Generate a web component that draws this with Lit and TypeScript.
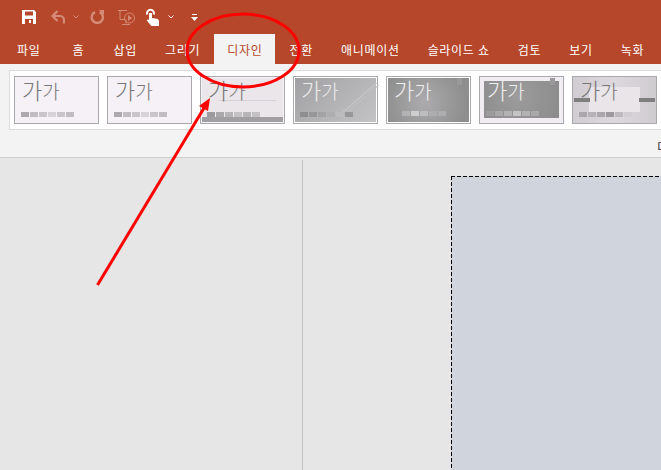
import { LitElement, html, css, svg } from 'lit';
import { customElement, property } from 'lit/decorators.js';

const TABS = ['파일', '홈', '삽입', '그리기', '디자인', '전환', '애니메이션', '슬라이드 쇼', '검토', '보기', '녹화'];

const LIGHT_SW = ['#aca9ad', '#c0bdc2', '#c9c6cb', '#d6d3d8', '#c9c6cb', '#c0bdc2'];

@customElement('theme-thumb')
export class ThemeThumb extends LitElement {
  @property({ type: String }) variant = 'plain';
  @property({ type: Array }) swatches: string[] = LIGHT_SW;

  static styles = css`
    :host {
      display: block;
      flex: none;
    }
    .thumb {
      position: relative;
      box-sizing: border-box;
      width: 85px;
      height: 48px;
      border: 1px solid #a9a9ad;
      background: #f6f1f6;
      color: #777;
    }
    .label {
      position: absolute;
      left: 7px;
      top: 1px;
      font-size: 22px;
      line-height: 22px;
      font-weight: 300;
      white-space: nowrap;
    }
    .label span {
      font-size: 19px;
    }
    .swatches {
      position: absolute;
      left: 6px;
      top: 35px;
      display: flex;
      gap: 1px;
    }
    .swatches i {
      width: 8px;
      height: 5px;
    }
    .deco {
      position: absolute;
    }

    .rule .thumb {
      background: #ebe6ea;
      box-shadow: inset 0 0 0 1px #f6f4f6;
    }
    .rule .line {
      left: 18px;
      right: 8px;
      top: 23px;
      height: 1px;
      background: #d6d2d7;
    }
    .rule .band {
      left: 1px;
      right: 1px;
      top: 40px;
      height: 5px;
      background: #a19fa1;
    }

    .sheen .thumb {
      background: linear-gradient(135deg, #a0a0a2, #c4c4c6);
      box-shadow: inset 0 0 0 1px #fff;
      color: #ececec;
    }
    .sheen .diag {
      left: 44px;
      top: 20px;
      width: 44px;
      height: 1px;
      background: #c8c8ca;
      transform: rotate(-41deg);
    }
    .sheen .diag2 {
      top: 22px;
      left: 46px;
      background: #c0c0c2;
    }

    .glow .thumb {
      background: radial-gradient(circle at 45% 55%, #adabae, #8d8e8d 80%);
      box-shadow: inset 0 0 0 1px #fff;
      color: #f0f0f0;
    }
    .glow .swatches {
      left: 15px;
      top: 34px;
    }
    .corner {
      left: 70px;
      top: 1px;
      width: 5px;
      height: 7px;
      background: #9a9a9b;
    }

    .framed .thumb {
      background: #f1ebf2;
      color: #f0f0f0;
    }
    .framed .panel {
      left: 4px;
      right: 4px;
      top: 4px;
      height: 37px;
      background: radial-gradient(circle at 45% 40%, #9c9c9d, #8b8b8b);
    }
    .framed .swatches {
      top: 34px;
    }

    .card .thumb {
      background: linear-gradient(90deg, #d0ccd1, #dcd8dd 50%, #cfccd0);
    }
    .card .panel {
      left: 16px;
      right: 16px;
      top: 10px;
      height: 25px;
      background: #e9e5e9;
    }
    .card .bar {
      top: 21px;
      width: 16px;
      height: 4px;
      background: #807f80;
    }
    .card .bar.left {
      left: 1px;
    }
    .card .bar.right {
      right: 1px;
    }
  `;

  private deco() {
    switch (this.variant) {
      case 'rule':
        return html`<div class="deco line"></div><div class="deco band"></div>`;
      case 'sheen':
        return html`<div class="deco diag"></div><div class="deco diag diag2"></div>`;
      case 'glow':
        return html`<div class="deco corner"></div>`;
      case 'framed':
        return html`<div class="deco panel"></div><div class="deco corner"></div>`;
      case 'card':
        return html`<div class="deco panel"></div><div class="deco bar left"></div><div class="deco bar right"></div>`;
      default:
        return '';
    }
  }

  render() {
    return html`
      <div class=${this.variant}>
        <div class="thumb">
          ${this.deco()}
          <div class="label">가<span>가</span></div>
          <div class="swatches">
            ${this.swatches.map((c) => html`<i style="background:${c}"></i>`)}
          </div>
        </div>
      </div>
    `;
  }
}

const FADED = '#d48c78';

const saveIcon = svg`<path fill="#fff" fill-rule="evenodd" d="M0 0h12l2 2v12H0zM3 1.5v4h8v-4zM3 9v5h8V9zM7 10h2v3H7z"/>`;
const undoIcon = svg`<path fill="none" stroke="${FADED}" stroke-width="2.2" d="M2 6h7a4 4 0 0 1 4 4v3.5M6.5 1L1.5 6l5 5"/>`;
const redoIcon = svg`<path fill="none" stroke="${FADED}" stroke-width="2.4" d="M5 2.2a5.6 5.6 0 1 0 4.6 0"/><path fill="${FADED}" d="M9 0h5v5z"/>`;
const showIcon = svg`<g fill="none" stroke="${FADED}" stroke-width="1"><path d="M0 .5h9M2 .5v9h5M8 9.5v4M4 14.5h8"/><circle cx="11.5" cy="8" r="5"/></g><path fill="${FADED}" d="M10 5l4 3-4 3z"/>`;
const touchIcon = svg`<path fill="#fff" d="M3 5h3v5l4.6.8c1.6.3 2.4 1.3 2.4 2.8V18H5.4L.8 12.4l1.2-1.2 1 .9z"/><path fill="none" stroke="#fff" stroke-width="2" d="M1.4 6.5a3.4 3.4 0 1 1 6.2 0"/>`;

@customElement('app-root')
export class AppRoot extends LitElement {
  static styles = css`
    :host {
      display: block;
      width: 661px;
      height: 470px;
      position: relative;
      overflow: hidden;
      font-family: 'Noto Sans CJK KR', 'Noto Sans', sans-serif;
      background: #e6e6e6;
    }
    .titlebar {
      height: 34px;
      background: #b7472a;
      display: flex;
      align-items: center;
      padding-left: 22px;
    }
    .titlebar svg {
      display: block;
      flex: none;
    }
    .tabs {
      height: 30px;
      background: #b7472a;
      display: flex;
    }
    .tab {
      flex: none;
      display: flex;
      align-items: center;
      justify-content: center;
      padding: 0 14px;
      color: #fff;
      font-size: 12px;
      letter-spacing: 0.7px;
      white-space: nowrap;
    }
    .tab.first {
      padding: 0 17px;
    }
    .tab.solo {
      box-sizing: border-box;
      width: 42px;
      padding: 0;
    }
    .tab.active {
      background: #f3f3f3;
      color: #b7472a;
      padding: 0 13px;
    }
    .ribbon {
      box-sizing: border-box;
      height: 94px;
      background: #f3f3f3;
      border-bottom: 1px solid #cfcfcf;
      padding: 6px 0 0 9px;
    }
    .gallery {
      box-sizing: border-box;
      height: 60px;
      width: 660px;
      background: #fff;
      border: 1px solid #dcdcdc;
      border-right: 0;
      padding: 5px 0 0 4px;
      display: flex;
      gap: 8px;
      overflow: hidden;
    }
    .groupname {
      font-size: 12px;
      line-height: 14px;
      padding: 10px 0 0 648px;
      color: #333;
      white-space: nowrap;
      overflow: hidden;
    }
    .work {
      display: flex;
      height: 312px;
      overflow: hidden;
    }
    .pane {
      flex: none;
      width: 302px;
    }
    .stage {
      flex: 1;
      margin-top: 2px;
      border-left: 1px solid #c4c4c4;
      padding: 16px 0 0 148px;
    }
    .slide {
      width: 500px;
      height: 400px;
      background-color: #d0d4dd;
      background-image:
        repeating-linear-gradient(90deg, #000 0 4px, transparent 4px 6px),
        repeating-linear-gradient(180deg, #000 0 4px, transparent 4px 6px);
      background-size: 100% 1px, 1px 100%;
      background-repeat: no-repeat;
    }
    .marks {
      position: absolute;
      inset: 0;
      pointer-events: none;
    }
  `;

  render() {
    return html`
      <div class="titlebar">
        <svg width="14" height="14" viewBox="0 0 14 14">${saveIcon}</svg>
        <svg style="margin-left:15px" width="14" height="14" viewBox="0 0 14 14">${undoIcon}</svg>
        <svg style="margin-left:8px" width="6" height="4" viewBox="0 0 6 4"><path fill="none" stroke="${FADED}" d="M.5.5L3 3 5.5.5"/></svg>
        <svg style="margin-left:11px" width="14" height="14" viewBox="0 0 14 14">${redoIcon}</svg>
        <svg style="margin-left:14px" width="17" height="15" viewBox="0 0 17 15">${showIcon}</svg>
        <svg style="margin-left:11px" width="14" height="18" viewBox="0 0 14 18">${touchIcon}</svg>
        <svg style="margin-left:8px" width="6" height="4" viewBox="0 0 6 4"><path fill="none" stroke="#fff" d="M.5.5L3 3 5.5.5"/></svg>
        <svg style="margin-left:17px" width="7" height="7" viewBox="0 0 7 7"><path fill="#fff" d="M1 0h5v1H1zM0 3h7L3.5 7z"/></svg>
      </div>
      <div class="tabs">
        ${TABS.map((t, i) => html`
          <div class="tab ${i === 0 ? 'first' : ''} ${i === 1 ? 'solo' : ''} ${i === 4 ? 'active' : ''}">${t}</div>
        `)}
      </div>
      <div class="ribbon">
        <div class="gallery">
          <theme-thumb></theme-thumb>
          <theme-thumb></theme-thumb>
          <theme-thumb variant="rule" .swatches=${['#9c9a9c', '#aaa8aa', '#b7b5b7', '#c3c1c3', '#b7b5b7', '#c3c1c3']}></theme-thumb>
          <theme-thumb variant="sheen" .swatches=${['#8e8e8f', '#979798', '#a3a3a4', '#adadae', '#bcbcbd', '#979798']}></theme-thumb>
          <theme-thumb variant="glow" .swatches=${['#b3b2b4', '#cfcecf', '#bdbcbe', '#adacae', '#adacae']}></theme-thumb>
          <theme-thumb variant="framed" .swatches=${['#9d9d9e', '#a9a9aa', '#b2b2b3', '#c4c4c5', '#b2b2b3', '#a9a9aa']}></theme-thumb>
          <theme-thumb variant="card" .swatches=${['#a9a7aa', '#b5b3b6', '#a9a7aa', '#9c9a9d', '#bdbbbe', '#cfcdd0']}></theme-thumb>
        </div>
        <div class="groupname">디자인</div>
      </div>
      <div class="work">
        <div class="pane"></div>
        <div class="stage"><div class="slide"></div></div>
      </div>
      <svg class="marks" width="661" height="470" viewBox="0 0 661 470">
        <ellipse cx="243" cy="50.5" rx="56" ry="36.5" fill="none" stroke="#f00" stroke-width="3"/>
        <path d="M97.5 285L204 108" fill="none" stroke="#f00" stroke-width="3"/>
        <path d="M210 98L199 106L208 111z" fill="#f00"/>
      </svg>
    `;
  }
}
